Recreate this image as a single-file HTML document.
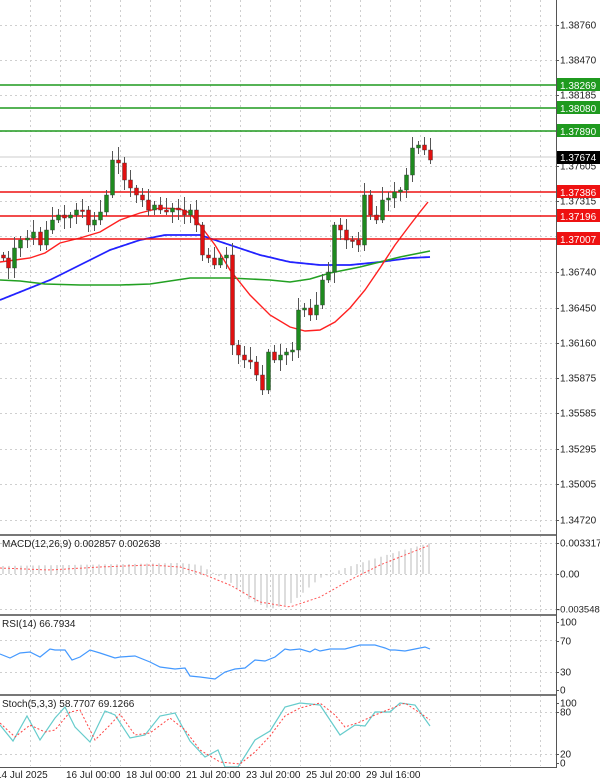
<!DOCTYPE html><html><head><style>
body{margin:0;background:#fff;width:600px;height:779px;overflow:hidden;font-family:"Liberation Sans",Tahoma,sans-serif}
svg text{font-family:"Liberation Sans",sans-serif;font-size:10px;fill:#222}
</style></head><body>
<svg id="s" width="600" height="779" xmlns="http://www.w3.org/2000/svg">
<rect width="600" height="779" fill="#fff"/>
<g id="grid" stroke="#cfcfcf" stroke-dasharray="2,3" stroke-width="1"></g>
<g id="lines"></g>
<g id="cand"></g>
<g id="ax"></g>
<g stroke="#777" stroke-width="2">
<line x1="0" y1="535" x2="556" y2="535"/><line x1="0" y1="615" x2="556" y2="615"/><line x1="0" y1="695" x2="556" y2="695"/>
</g>
<line x1="556.5" y1="0" x2="556.5" y2="768" stroke="#555"/>
<line x1="0" y1="767.5" x2="556" y2="767.5" stroke="#555"/>
<text x="2" y="547">MACD(12,26,9) 0.002857 0.002638</text>
<text x="2" y="627">RSI(14) 66.7934</text>
<text x="2" y="707">Stoch(5,3,3) 58.7707 69.1266</text>
<g font-size="10">
<text x="-4" y="778">14 Jul 2025</text><text x="66" y="778">16 Jul 00:00</text><text x="126" y="778">18 Jul 00:00</text>
<text x="186" y="778">21 Jul 20:00</text><text x="246" y="778">23 Jul 20:00</text><text x="306" y="778">25 Jul 20:00</text><text x="366" y="778">29 Jul 16:00</text>
</g>
</svg>
<script>
const NS="http://www.w3.org/2000/svg";
function el(p,t,a,txt){const e=document.createElementNS(NS,t);for(const k in a)e.setAttribute(k,a[k]);if(txt!=null)e.textContent=txt;document.getElementById(p).appendChild(e);return e}
for(let x=30;x<556;x+=30){el("grid","line",{x1:x+.5,y1:0,x2:x+.5,y2:766})}
const hl=[25,60,95,131,166,201,236,272,308,343,378,413,449,484,520, 543,574,609, 640,672, 712,754];
hl.forEach(y=>el("grid","line",{x1:0,y1:y+.5,x2:556,y2:y+.5}));
const labs=[[25,"1.38760"],[60,"1.38470"],[95,"1.38185"],[166,"1.37605"],[201,"1.37315"],[272,"1.36740"],[308,"1.36450"],[343,"1.36160"],[378,"1.35875"],[413,"1.35585"],[449,"1.35295"],[484,"1.35005"],[520,"1.34720"],
[543,"0.003317"],[574,"0.00"],[609,"-0.003548"],[622,"100"],[641,"70"],[672,"30"],[690,"0"],[703,"100"],[712,"80"],[754,"20"],[763,"0"]];
labs.forEach(([y,t])=>{el("ax","line",{x1:556,y1:y+.5,x2:559,y2:y+.5,stroke:"#555"});const a={x:t[0]=="-"?557:560,y:y+3.5};if(t.length>8)a.style="font-size:9.5px";el("ax","text",a,t)});
function interp(pts,x){for(let i=0;i<pts.length-1;i++){if(x>=pts[i][0]&&x<=pts[i+1][0]){const t=(x-pts[i][0])/(pts[i+1][0]-pts[i][0]);return pts[i][1]+t*(pts[i+1][1]-pts[i][1])}}return pts[x<pts[0][0]?0:pts.length-1][1]}
function poly(pts,col,w,dash,g){let d=pts.map((p,i)=>(i?"L":"M")+p[0]+","+p[1]).join("");const a={d:d,fill:"none",stroke:col,"stroke-width":w};if(dash)a["stroke-dasharray"]=dash;el(g||"lines","path",a)}
function smooth(pts,step){const r=[];for(let x=pts[0][0];x<=pts[pts.length-1][0];x+=step)r.push([x,interp(pts,x).toFixed(1)]);return r}
poly(smooth([[0,300],[20,292],[50,280],[80,265],[110,250],[140,240],[165,235],[200,235],[230,245],[260,255],[290,262],[320,265],[350,265],[380,262],[410,258],[430,257]],2),"#2222ff",1.8);
poly([[0,280],[20,281],[45,284],[80,285],[120,285],[150,284],[170,281],[190,278],[230,278],[270,280],[290,282],[310,279],[330,273],[360,267],[380,262],[400,257],[415,254],[430,251]],"#22a022",1.6);
poly([[0,262],[15,260],[30,258],[45,253],[60,243],[80,238],[100,232],[120,220],[140,213],[160,208],[180,209],[190,213],[200,225],[215,245],[230,270],[250,295],[270,315],[290,327],[305,331],[320,330],[335,322],[350,308],[365,290],[380,268],[395,245],[410,225],[420,212],[428,202]],"#ff2020",1.4);
[[85,"1.38269","#1f9a1f"],[108,"1.38080","#1f9a1f"],[131,"1.37890","#1f9a1f"],[192,"1.37386","#ee1111"],[216,"1.37196","#ee1111"],[239,"1.37007","#ee1111"]].forEach(([y,t,c])=>{
el("lines","line",{x1:0,y1:y,x2:556,y2:y,stroke:c,"stroke-width":1.5});
el("ax","rect",{x:557,y:y-7,width:43,height:13,fill:c});el("ax","text",{x:560,y:y+4,style:"fill:#fff"},t)});
el("lines","line",{x1:0,y1:157,x2:556,y2:157,stroke:"#ccc"});
el("ax","rect",{x:557,y:151,width:43,height:13,fill:"#000"});el("ax","text",{x:560,y:161,style:"fill:#fff"},"1.37674");
const cp=[[3,258],[8,268],[14,248],[20,240],[27,238],[33,232],[40,245],[46,230],[52,220],[58,215],[64,218],[70,215],[76,210],[82,210],[88,225],[94,220],[100,212],[106,195],[112,160],[118,163],[124,180],[130,188],[136,195],[142,200],[148,210],[154,205],[160,210],[166,212],[172,208],[178,210],[184,215],[190,210],[196,225],[202,255],[208,258],[214,265],[220,258],[226,255],[232,345],[238,355],[244,360],[250,362],[256,375],[262,390],[268,352],[274,360],[280,355],[286,352],[292,350],[298,310],[304,308],[310,315],[316,305],[322,280],[328,272],[334,225],[340,230],[346,240],[352,240],[358,245],[364,195],[370,215],[376,220],[382,200],[388,198],[394,192],[400,190],[406,175],[412,148],[418,145],[424,150],[430,160]];
let prev=255;
cp.forEach(([x,c],i)=>{const o=prev;prev=c;const up=c<o;const top=Math.min(o,c),bot=Math.max(o,c);const h=((i*37)%11)+3,l=((i*53)%9)+3;
el("cand","line",{x1:x+.5,y1:top-h,x2:x+.5,y2:bot+l,stroke:"#555","stroke-width":1});
el("cand","rect",{x:x-1.5,y:top,width:4,height:Math.max(bot-top,1.5),fill:up?"#1e8a1e":"#e01010",stroke:"#333","stroke-width":.4});});
const hz=574;
const hist=[[0,566],[130,564],[180,563],[200,565],[215,574],[230,582],[250,600],[270,609],[290,604],[320,578],[330,574],[345,568],[370,560],[400,551],[430,543]];
for(let x=3;x<=430;x+=6){const y=interp(hist,x);el("lines","line",{x1:x,y1:hz,x2:x,y2:y,stroke:"#bbb","stroke-width":1})}
poly(smooth([[0,568],[50,570],[100,567],[150,565],[180,567],[200,573],[230,585],[260,602],[290,607],[320,597],[350,580],[380,565],[410,553],[430,545]],4),"#f55",1,"2,2");
poly([[0,654],[10,658],[20,653],[30,652],[40,657],[50,649],[55,650],[65,650],[72,660],[80,657],[90,650],[100,653],[115,658],[120,657],[135,656],[150,662],[160,667],[175,669],[185,668],[190,676],[200,677],[215,679],[225,672],[235,669],[245,668],[255,660],[265,661],[275,657],[285,649],[290,650],[300,649],[310,652],[315,649],[320,651],[330,649],[345,649],[360,645],[375,645],[385,648],[390,650],[395,650],[405,651],[410,650],[415,649],[425,647],[430,649]],"#4499ff",1.2);
poly([[0,725],[13,741],[27,716],[40,740],[55,718],[65,707],[75,727],[90,742],[105,711],[115,715],[130,738],[145,735],[160,716],[175,713],[190,741],[205,757],[218,750],[225,767],[238,767],[255,740],[270,731],[285,707],[300,703],[320,705],[330,720],[340,735],[355,725],[365,726],[375,712],[390,712],[400,703],[415,705],[430,726]],"#66cccc",1.2);
poly([[0,723],[15,737],[30,725],[45,732],[55,730],[70,712],[80,710],[95,740],[110,725],[120,714],[135,735],[150,733],[170,718],[185,730],[200,750],[220,762],[240,764],[255,752],[270,736],[285,716],[300,708],[320,703],[335,715],[345,727],[360,722],[375,715],[390,709],[405,703],[420,713],[430,720]],"#f44",1,"2,2");
</script>
</body></html>
